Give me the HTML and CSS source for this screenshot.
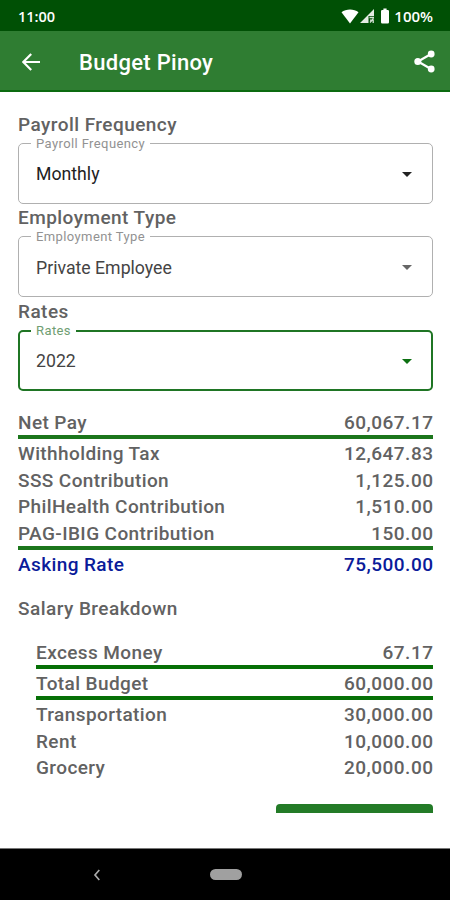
FILE: index.html
```html
<!DOCTYPE html>
<html lang="en">
<head>
    <meta charset="UTF-8">
    <meta name="viewport" content="width=device-width, initial-scale=1.0">
    <title>Budget Pinoy</title>
    <link rel="stylesheet" href="styles.css">
</head>
<body>
    <div class="status-bar">
        <span class="clock">11:00</span>
        <div class="status-icons">
            <svg class="wifi" width="18" height="15" viewBox="0 0 18 15"><path d="M0.5 3.2C5 -0.4 13 -0.4 17.5 3.2L9 14.5Z" fill="#fff"/></svg>
            <svg class="signal" width="14" height="14" viewBox="0 0 14 14">
                <path d="M14 0V7H8.5V14H0Z" fill="#e4ece4"/>
                <path d="M9.5 8.5H14M10 11.2H13.5M10 13.5L13.5 9.5M13.2 11V14" stroke="#d5e2d5" stroke-width="1.3" fill="none"/>
            </svg>
            <svg class="battery" width="8" height="16" viewBox="0 0 8 16"><path d="M2.4 0.5H5.6V2H6.8Q8 2 8 3.2V14.3Q8 15.5 6.8 15.5H1.2Q0 15.5 0 14.3V3.2Q0 2 1.2 2H2.4Z" fill="#fff"/></svg>
            <span class="percent">100%</span>
        </div>
    </div>

    <header class="app-bar">
        <svg class="back" width="18" height="18" viewBox="0 0 18 18"><path d="M18 9H1.8M9.2 1L1.3 9L9.2 17" fill="none" stroke="#fff" stroke-width="2.2"/></svg>
        <h1>Budget Pinoy</h1>
        <svg class="share" width="21" height="23" viewBox="0 0 21 23">
            <path d="M17 4L4 11.5L17 19" fill="none" stroke="#fff" stroke-width="2.2"/>
            <circle cx="17.2" cy="4" r="3.4" fill="#fff"/>
            <circle cx="3.8" cy="11.5" r="3.5" fill="#fff"/>
            <circle cx="17.2" cy="19" r="3.4" fill="#fff"/>
        </svg>
    </header>

    <main class="content">
        <h2>Payroll Frequency</h2>
        <fieldset class="field">
            <legend>Payroll Frequency</legend>
            <span class="value dark">Monthly</span>
            <span class="arrow dark"></span>
        </fieldset>

        <h2>Employment Type</h2>
        <fieldset class="field">
            <legend>Employment Type</legend>
            <span class="value">Private Employee</span>
            <span class="arrow"></span>
        </fieldset>

        <h2>Rates</h2>
        <fieldset class="field focused">
            <legend>Rates</legend>
            <span class="value">2022</span>
            <span class="arrow"></span>
        </fieldset>

        <section class="summary">
            <div class="row line"><span>Net Pay</span><span class="amount">60,067.17</span></div>
            <div class="row"><span>Withholding Tax</span><span class="amount">12,647.83</span></div>
            <div class="row"><span>SSS Contribution</span><span class="amount">1,125.00</span></div>
            <div class="row"><span>PhilHealth Contribution</span><span class="amount">1,510.00</span></div>
            <div class="row line"><span>PAG-IBIG Contribution</span><span class="amount">150.00</span></div>
            <div class="row asking"><span>Asking Rate</span><span class="amount">75,500.00</span></div>
        </section>

        <h2 class="breakdown-title">Salary Breakdown</h2>
        <section class="breakdown">
            <div class="row line"><span>Excess Money</span><span class="amount">67.17</span></div>
            <div class="row line"><span>Total Budget</span><span class="amount">60,000.00</span></div>
            <div class="row"><span>Transportation</span><span class="amount">30,000.00</span></div>
            <div class="row"><span>Rent</span><span class="amount">10,000.00</span></div>
            <div class="row"><span>Grocery</span><span class="amount">20,000.00</span></div>
        </section>

        <!-- top edge of the button, cut off by the scroll area -->
        <div class="button-edge"></div>
    </main>

    <nav class="nav-bar">
        <svg class="nav-back" width="8" height="12" viewBox="0 0 8 12"><path d="M6.3 1L2 6L6.3 11" fill="none" stroke="#aaa" stroke-width="1.7"/></svg>
        <div class="home-pill"></div>
    </nav>
</body>
</html>
```
FILE: styles.css
```css
* {
    box-sizing: border-box;
}
body {
    margin: 0;
    height: 900px;
    display: flex;
    flex-direction: column;
    overflow: hidden;
    background: #fff;
    color: #626262;
    font-family: Roboto, "Liberation Sans", sans-serif;
}
svg {
    display: block;
    flex: none;
}
.status-bar {
    height: 31px;
    padding: 1px 17px 0 18px;
    display: flex;
    align-items: center;
    justify-content: space-between;
    background: #005005;
    color: #fff;
    font-family: "Open Sans", Roboto, sans-serif;
    font-size: 14.5px;
    font-weight: 600;
}
.status-icons {
    display: flex;
    align-items: center;
}
.signal {
    margin-left: 1px;
}
.battery {
    margin-left: 7px;
}
.percent {
    margin-left: 5px;
    font-size: 15px;
}
.app-bar {
    height: 61px;
    padding: 2px 15px 0 22px;
    display: flex;
    align-items: center;
    background: #2f7d32;
    border-bottom: 2px solid #0c6b10;
    color: #fff;
}
.app-bar h1 {
    margin: 2px 0 0 39px;
    flex: 1;
    font-size: 22px;
    font-weight: 500;
    letter-spacing: 0.3px;
}
.content {
    flex: 1;
    padding: 18.5px 17px 0 18px;
}
h2 {
    margin: 0;
    height: 26px;
    line-height: 28px;
    font-size: 19px;
    font-weight: 500;
    letter-spacing: 0.45px;
}
.field {
    position: relative;
    height: 67px;
    margin: 0 0 0.8px;
    padding: 0 20px 4px 17px;
    display: flex;
    align-items: center;
    justify-content: space-between;
    border: 1.5px solid #b0b0b0;
    border-radius: 5px;
}
.field legend {
    height: 13px;
    margin-left: -5px;
    padding: 0 5px;
    line-height: 13px;
    font-size: 13px;
    letter-spacing: 0.4px;
    color: #929292;
}
.field .value {
    font-size: 17.7px;
    letter-spacing: 0;
    color: #444;
}
.field .value.dark {
    color: #222;
}
.arrow {
    border: 5.5px solid transparent;
    border-top: 5.5px solid #666;
    border-bottom: 0;
}
.arrow.dark {
    border-top-color: #222;
}
.field.focused {
    padding: 0 19px 4px 16px;
    border: 2px solid #1f7524;
}
.focused legend {
    color: #6f9e72;
}
.focused .arrow {
    border-top-color: #0d7012;
}
.summary {
    margin-top: 17px;
}
.row {
    height: 26.5px;
    display: flex;
    justify-content: space-between;
    line-height: 30px;
    font-size: 19px;
    font-weight: 500;
    letter-spacing: 0.4px;
}
.row.line {
    height: 31px;
    border-bottom: 4px solid #1c761c;
}
.amount {
    margin-right: -0.5px;
    letter-spacing: 0.5px;
}
.asking {
    color: #0a1b9a;
}
.breakdown-title {
    margin-top: 19px;
}
.breakdown {
    margin: 17px 0 0 18px;
}
.breakdown .line {
    border-bottom-color: #067006;
}
.button-edge {
    width: 157px;
    height: 9px;
    margin: 24.5px 0 0 auto;
    background: #237b27;
    border-radius: 4px 4px 0 0;
}
.nav-bar {
    height: 52px;
    padding-left: 93px;
    display: flex;
    align-items: center;
    background: #000;
    border-top: 1px solid #777;
}
.home-pill {
    width: 32px;
    height: 11px;
    margin-left: 109px;
    border-radius: 6px;
    background: #a0a0a0;
}
```
